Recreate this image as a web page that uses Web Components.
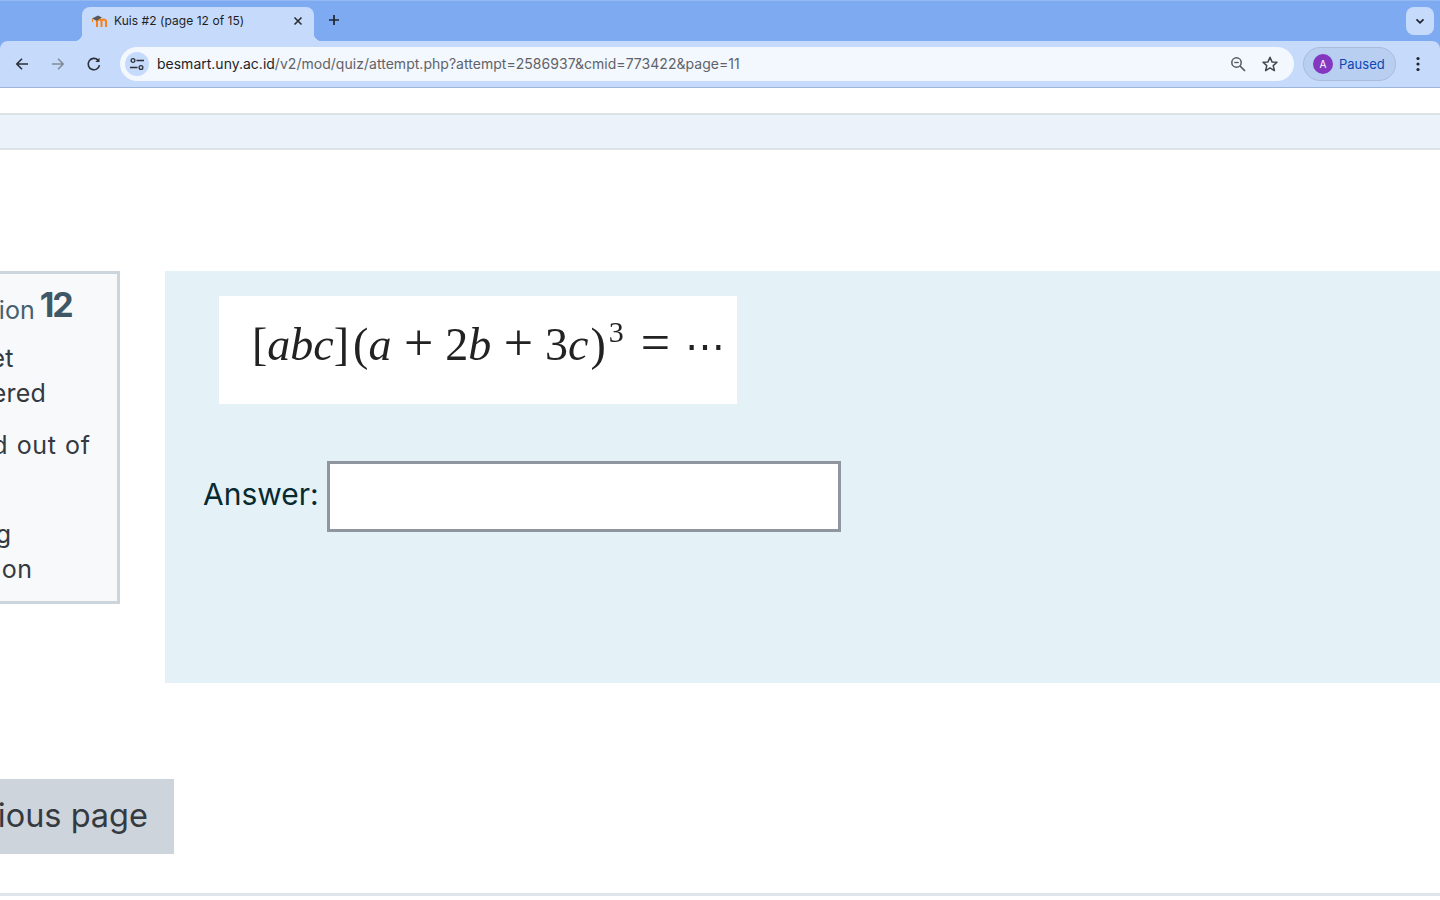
<!DOCTYPE html>
<html>
<head>
<meta charset="utf-8">
<title>Kuis #2 (page 12 of 15)</title>
<style>
  html, body { margin: 0; padding: 0; height: 100%; overflow: hidden; background: #fff; }
  body { display: flex; flex-flow: column nowrap; font-family: Inter, "Liberation Sans", sans-serif; }
</style>
</head>
<body>
<browser-chrome></browser-chrome>
<quiz-page>
  <quiz-info slot="info"></quiz-info>
  <question-panel slot="question"></question-panel>
  <page-button slot="nav">Previous page</page-button>
</quiz-page>

<script>
/* ========================================
   Browser window: tab strip and toolbar
======================================== */
class BrowserChrome extends HTMLElement {
  constructor() {
    super();
    this.attachShadow({ mode: 'open' });
    this.shadowRoot.innerHTML = `
<style>
  :host { display: block; flex: none; font-family: Inter, "Liberation Sans", sans-serif; background: #7eaaf1; }
  svg { display: block; fill: none; }
  .strip { display: flex; align-items: flex-start; height: 41px; box-sizing: border-box; padding: 7px 8px 0 82px; border-top: 1px solid #93b8f4; }
  .tab { position: relative; display: flex; align-items: center; width: 232px; height: 34px; margin-top: -1px; padding: 0 10px 7px 9px; box-sizing: border-box; background: #c6dafb; border-radius: 8px 8px 0 0; }
  .tab::before, .tab::after { content: ""; position: absolute; bottom: 0; width: 8px; height: 8px; }
  .tab::before { left: -8px; background: radial-gradient(circle at 0 0, transparent 8px, #c6dafb 8.5px); }
  .tab::after { right: -8px; background: radial-gradient(circle at 100% 0, transparent 8px, #c6dafb 8.5px); }
  .title { flex: 1; margin-left: 7px; font-size: 12px; letter-spacing: 0.05px; color: #1f1f1f; white-space: nowrap; }
  .new { margin: 2px 0 0 8px; }
  .spring { flex: 1; }
  .more { display: flex; align-items: center; justify-content: center; width: 28px; height: 28px; margin: -1px -2px 0 0; border-radius: 8px; background: #c6dafb; }
  .toolbar { display: flex; align-items: center; height: 47px; box-sizing: border-box; border-bottom: 1px solid #9db5da; background: #c6dafb; border-radius: 8px 8px 0 0; padding: 0 4px 1px 4px; }
  .btn { width: 36px; display: flex; justify-content: center; flex: none; }
  .omni { flex: 1; display: flex; align-items: center; height: 34px; margin-left: 8px; background: #f3f7fe; border-radius: 17px; padding: 0 15px 0 5px; }
  .site { display: flex; align-items: center; justify-content: center; width: 24px; height: 24px; border-radius: 50%; background: #c6dafb; flex: none; }
  .url { flex: 1; margin-left: 8px; font-size: 14px; letter-spacing: 0.03px; color: #5f6368; white-space: nowrap; }
  .url b { font-weight: 400; letter-spacing: 0; color: #1f1f1f; }
  .omni svg.end { margin-left: 14px; }
  .profile { display: flex; align-items: center; gap: 6px; width: 93px; height: 34px; box-sizing: border-box; margin: 0 4px 0 9px; padding-left: 9px; border: 1px solid #a9bcdc; border-radius: 17px; background: #b9cff2; color: #0b47b5; font-size: 13px; flex: none; }
  .avatar { display: flex; align-items: center; justify-content: center; width: 20px; height: 20px; border-radius: 50%; background: #8338bf; color: #fff; font-size: 10px; }
</style>
<div class="strip">
  <div class="tab">
    <svg width="16" height="14" viewBox="0 0 16 14">
      <path d="M6 13 V7.500 Q6 5.500 8.500 5.500 Q10.500 5.500 10.500 7.500 V13 M10.500 7.500 Q10.500 5.500 12.500 5.500 Q15 5.500 15 7.500 V13" stroke="#f98012" stroke-width="2"/>
      <path d="M1 4.500 L7 1.500 L11 3.500 L5.500 6.800 Z" fill="#58595b"/>
      <path d="M1.500 5 V8" stroke="#f98012" stroke-width="1"/>
    </svg>
    <span class="title">Kuis #2 (page 12 of 15)</span>
    <svg width="12" height="12" viewBox="0 0 12 12"><path d="M2.500 2.500 L9.500 9.500 M9.500 2.500 L2.500 9.500" stroke="#2b2d30" stroke-width="1.600"/></svg>
  </div>
  <svg class="new" width="24" height="20" viewBox="0 0 24 20"><path d="M12 5 V15 M7 10 H17" stroke="#1f2430" stroke-width="1.700"/></svg>
  <div class="spring"></div>
  <div class="more"><svg width="12" height="12" viewBox="0 0 12 12"><path d="M2.500 4.300 L6 7.800 L9.500 4.300" stroke="#1f2430" stroke-width="1.700"/></svg></div>
</div>
<div class="toolbar">
  <div class="btn"><svg width="16" height="16" viewBox="0 0 16 16"><path d="M14 8 H3 M8 2.800 L2.800 8 L8 13.200" stroke="#2b2f36" stroke-width="1.600"/></svg></div>
  <div class="btn"><svg width="16" height="16" viewBox="0 0 16 16"><path d="M2 8 H13 M8 2.800 L13.200 8 L8 13.200" stroke="#838a98" stroke-width="1.600"/></svg></div>
  <div class="btn"><svg width="16" height="16" viewBox="0 0 16 16"><path d="M13.500 9.200 A5.700 5.700 0 1 1 12 4.100" stroke="#2b2f36" stroke-width="1.600"/><path d="M13.500 1.800 V6 H9.300 Z" fill="#2b2f36"/></svg></div>
  <div class="omni">
    <div class="site"><svg width="16" height="16" viewBox="0 0 16 16"><circle cx="4" cy="4.500" r="1.900" stroke="#2b2f36" stroke-width="1.300"/><path d="M7.500 4.500 H15 M1 11.500 H8.500" stroke="#2b2f36" stroke-width="1.300"/><circle cx="12" cy="11.500" r="1.900" stroke="#2b2f36" stroke-width="1.300"/></svg></div>
    <span class="url"><b>besmart.uny.ac.id</b>/v2/mod/quiz/attempt.php?attempt=2586937&amp;cmid=773422&amp;page=11</span>
    <svg class="end" width="18" height="18" viewBox="0 0 18 18"><circle cx="7.500" cy="7.500" r="4.700" stroke="#555a60" stroke-width="1.500"/><path d="M11 11 L16 16" stroke="#555a60" stroke-width="1.700"/><path d="M5.300 7.500 H9.700" stroke="#555a60" stroke-width="1.300"/></svg>
    <svg class="end" width="18" height="18" viewBox="0 0 18 18"><path d="M9 2.200 L11 6.900 L16 7.300 L12.200 10.600 L13.400 15.600 L9 12.900 L4.600 15.600 L5.800 10.600 L2 7.300 L7 6.900 Z" stroke="#44484e" stroke-width="1.500" stroke-linejoin="round"/></svg>
  </div>
  <div class="profile"><span class="avatar">A</span><span>Paused</span></div>
  <div class="btn"><svg width="16" height="16" viewBox="0 0 16 16" style="fill:#1f2430"><circle cx="8" cy="2.500" r="1.600"/><circle cx="8" cy="8" r="1.600"/><circle cx="8" cy="13.500" r="1.600"/></svg></div>
</div>`;
  }
}

/* ========================================
   Page shell: band, question row, nav, footer rule
======================================== */
class QuizPage extends HTMLElement {
  constructor() {
    super();
    this.attachShadow({ mode: 'open' });
    this.shadowRoot.innerHTML = `
<style>
  :host { display: flex; flex-flow: column nowrap; flex: 1; min-height: 0; overflow: hidden; background: #fff; }
  .band { height: 37px; box-sizing: border-box; margin-top: 25px; background: #ebf2fa; border-top: 2px solid #dce3e7; border-bottom: 2px solid #dce3e7; flex: none; }
  .row { display: flex; align-items: flex-start; gap: 45px; margin: 121px -10px 0 -100px; flex: none; }
  .nav { margin: 96px 0 0 -100px; flex: none; }
  .rule { height: 3px; margin-top: 39px; background: #dfe5ea; flex: none; }
</style>
<div class="band"></div>
<div class="row"><slot name="info"></slot><slot name="question"></slot></div>
<div class="nav"><slot name="nav"></slot></div>
<div class="rule"></div>`;
  }
}

/* Left card: question number and state */
class QuizInfo extends HTMLElement {
  constructor() {
    super();
    this.attachShadow({ mode: 'open' });
    this.shadowRoot.innerHTML = `
<style>
  :host { display: block; flex: none; width: 220px; height: 333px; box-sizing: border-box; padding: 11px 0 0 26px; background: #f8f9fb; border: 3px solid #ccd4dc; font-family: Inter, "Liberation Sans", sans-serif; font-size: 25px; letter-spacing: 0.2px; word-spacing: -2px; line-height: 35px; color: #343a40; overflow: hidden; white-space: nowrap; }
  h3 { margin: 0 0 9px; font-size: 25px; font-weight: 400; letter-spacing: 0; word-spacing: 0; line-height: 44px; color: #46606f; }
  h3 b { position: relative; top: -2px; margin-left: -2px; font-size: 34px; font-weight: 700; letter-spacing: -2px; color: #3f5867; }
  p { margin: 0 0 17px; }
  .marked { margin: 0 0 19px -14px; letter-spacing: 0.6px; word-spacing: 1px; }
  .flagged { margin-left: -3px; letter-spacing: 0.6px; }
  .flag { display: inline-block; width: 33px; }
</style>
<h3>Question <b>12</b></h3>
<p>Not yet<br>answered</p>
<p class="marked">Marked out of<br>1.00</p>
<p class="flagged"><span class="flag"></span>Flag<br>question</p>`;
  }
}

/* Right panel: formula and answer box */
class QuestionPanel extends HTMLElement {
  constructor() {
    super();
    this.attachShadow({ mode: 'open' });
    this.shadowRoot.innerHTML = `
<style>
  :host { display: block; flex: 1; height: 412px; box-sizing: border-box; padding: 25px 0 0 54px; background: #e4f1f6; }
  .formula { display: flex; align-items: center; width: 518px; height: 108px; box-sizing: border-box; padding: 0 0 11px 33px; background: #fff; font-family: "Liberation Serif", serif; font-size: 46px; color: #222; white-space: nowrap; filter: blur(0.4px); }
  .formula i { font-style: italic; }
  .formula sup { margin-left: 3px; font-size: 30px; line-height: 0; position: relative; top: -2px; vertical-align: super; }
  .open { margin-left: 4px; }
  .close { margin-left: 2px; }
  .op { margin: 0 12px 0 12.500px; font-size: 52px; line-height: 0; }
  .eq { margin: 0 0 0 17px; font-size: 52px; line-height: 0; }
  .dots { margin-left: 15px; font-size: 40px; line-height: 0; }
  .answer { display: flex; align-items: center; gap: 8px; margin: 57px 0 0 -16px; font-family: Inter, "Liberation Sans", sans-serif; font-size: 30px; color: #062a30; }
  .answer span { padding-bottom: 5px; }
  .box { width: 514px; height: 71px; box-sizing: border-box; background: #fff; border: 3px solid #8f969f; }
</style>
<div class="formula"><span>[<i>abc</i>]<span class="open">(</span><i>a</i><span class="op">+</span>2<i>b</i><span class="op">+</span>3<i>c</i><span class="close">)</span><sup>3</sup><span class="eq">=</span><span class="dots">⋯</span></span></div>
<div class="answer"><span>Answer:</span><div class="box"></div></div>`;
  }
}

/* Grey navigation button */
class PageButton extends HTMLElement {
  constructor() {
    super();
    this.attachShadow({ mode: 'open' });
    this.shadowRoot.innerHTML = `
<style>
  :host { display: flex; align-items: center; justify-content: flex-end; width: 274px; height: 75px; box-sizing: border-box; padding: 0 26px 3px 0; background: #ced4dc; font-family: Inter, "Liberation Sans", sans-serif; font-size: 32.500px; color: #343a40; white-space: nowrap; }
</style>
<slot></slot>`;
  }
}

customElements.define('browser-chrome', BrowserChrome);
customElements.define('quiz-page', QuizPage);
customElements.define('quiz-info', QuizInfo);
customElements.define('question-panel', QuestionPanel);
customElements.define('page-button', PageButton);
</script>
</body>
</html>
